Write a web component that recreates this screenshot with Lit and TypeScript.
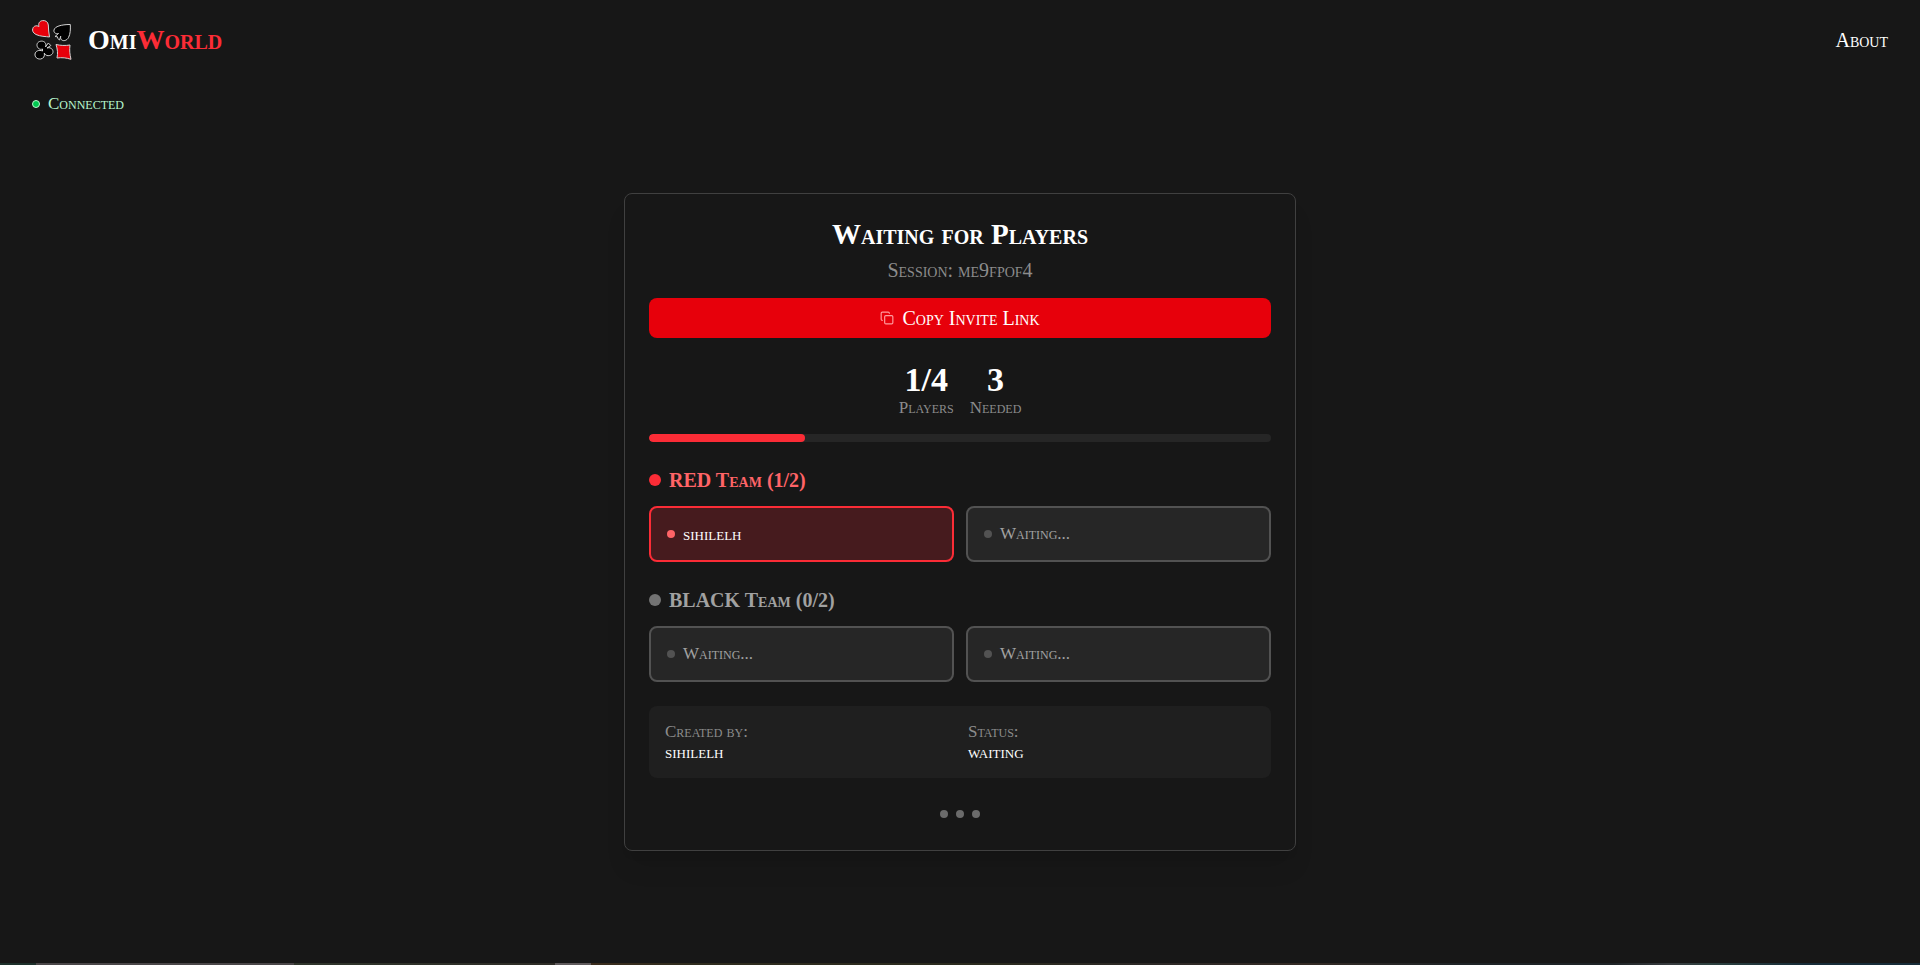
import { LitElement, html, css, svg } from "lit";
import { customElement, property, state } from "lit/decorators.js";

type Player = { name: string };

@customElement("brand-logo")
class BrandLogo extends LitElement {
  static styles = css`
    :host { display: block; line-height: 0; }
    .mark { width: 40px; height: 40px; }
  `;
  render() {
    return html`<svg class="mark" viewBox="0 0 40 40" stroke="#d4d4d4" stroke-width="1" stroke-linejoin="round" aria-hidden="true">
      ${svg`
      <path fill="#e7000b" d="M17.500 17 C14 16.500 8 16.500 4 14.500 C1 13 0 10.500 .8 8.500 C1.500 6 4.500 5 7 6.500 C6 3.500 7.500 1 10.500 .6 C13.500 .2 16 1.800 16.300 5 C16.500 9 16.700 13 17.500 17Z"/>
      <path fill="#000" d="M38.300 4.500 C38.500 9 38.500 14 36.500 17.500 C35 20.500 31.500 21.500 29.500 19.800 C28.700 19 28.400 17.800 28.700 16.200 L27.500 20 L25.800 18.500 L25.500 16.800 L23 16.500 L26.500 13.500 C23.500 14.200 21.500 12.500 22 10 C22.800 6.500 29 4.500 38.300 4.500Z"/>
      <path fill="#000" d="M10.500 29 C8 30 5.500 28.500 5 25.500 C4.700 22.500 7.500 20.800 10.500 21.200 C13.500 21.800 14.500 24.500 13.500 27 L16.300 23 L18.800 25.500 L15 28 C17.500 27 20.800 28.500 21 31.500 C21.200 34.500 18 36.200 15 35.500 C13.800 35.200 12.700 34 12.300 33 C13 36 11.500 38.800 8.500 39 C5 39.300 2.700 37 3 34 C3.500 31 7 29.500 10.500 31Z"/>
      <path fill="#e7000b" d="M24 24.500 C28.500 25.500 33 25.800 38 25 C37.300 30 37.800 34.500 39 39.300 C34.500 37.800 30 37.300 25 38 C26 33.500 25.500 29 24 24.500Z"/>`}
    </svg>`;
  }
}

@customElement("player-slot")
class PlayerSlot extends LitElement {
  @property({ attribute: false }) player?: Player;
  static styles = css`
    :host { display: block; }
    .slot {
      display: flex; align-items: center; gap: 8px; padding: 16px;
      border: 2px solid #525252; border-radius: 8px; background: #262626;
      color: #a1a1a1; font-size: 17px; line-height: 20px;
    }
    .slot.taken { border-color: #fb2c36; background: #461b1e; color: #fff; font-size: 18px; }
    .dot { width: 8px; height: 8px; border-radius: 50%; background: #525252; }
    .taken .dot { background: #ff6467; }
  `;
  render() {
    return html`<div class="slot ${this.player ? "taken" : ""}">
      <span class="dot"></span><span>${this.player?.name ?? "Waiting..."}</span>
    </div>`;
  }
}

@customElement("app-root")
class AppRoot extends LitElement {
  @state() private red: Player[] = [{ name: "sihilelh" }];
  @state() private black: Player[] = [];

  static styles = css`
    :host {
      display: flex; flex-direction: column; min-height: 100vh;
      background: #171717; color: #fff;
      font-family: "Liberation Serif", serif; font-variant-caps: small-caps;
      font-size: 20px; line-height: 24px;
    }
    * { box-sizing: border-box; }
    h2, h3, dl, dd, p { margin: 0; }
    .header { display: flex; align-items: center; justify-content: space-between; height: 80px; padding: 0 32px; }
    .brand { display: flex; align-items: center; gap: 16px; font-size: 28px; line-height: 32px; font-weight: 700; color: #fff; text-decoration: none; }
    .accent { color: #fb2c36; }
    .nav { color: #fff; text-decoration: none; }
    .main { flex: 1; display: grid; }
    .status { grid-area: 1 / 1; place-self: start; display: flex; align-items: center; gap: 8px; padding: 16px 32px; font-size: 17px; line-height: 16px; color: #b9f8cf; }
    .status-dot { width: 8px; height: 8px; border-radius: 50%; background: #00c950; border: 1px solid #b9f8cf; }
    .card {
      grid-area: 1 / 1; place-self: center; width: 100%; max-width: 672px;
      padding: 24px; border: 1px solid #404040; border-radius: 8px; background: #171717;
      box-shadow: 0 20px 25px -5px rgb(0 0 0 / 0.1), 0 8px 10px -6px rgb(0 0 0 / 0.1);
    }
    .intro { text-align: center; }
    .title { font-size: 29px; line-height: 32px; font-weight: 700; }
    .session { margin-top: 8px; color: #8c8c8c; }
    .copy {
      display: flex; align-items: center; justify-content: center; gap: 8px;
      width: 100%; height: 40px; margin-top: 16px; border: 0; border-radius: 8px;
      background: #e7000b; color: #fff; font: inherit; font-variant-caps: small-caps; cursor: pointer;
    }
    .copy-icon { width: 14px; height: 14px; color: #ff9a9e; }
    .stats { display: flex; justify-content: center; gap: 16px; margin-top: 24px; text-align: center; }
    .count { font-size: 34px; line-height: 36px; font-weight: 700; }
    .label { font-size: 17px; line-height: 20px; color: #8c8c8c; }
    .track { height: 8px; margin-top: 16px; border-radius: 4px; background: #262626; overflow: hidden; }
    .fill { height: 8px; border-radius: 4px; background: #fb2c36; }
    .team { margin-top: 24px; }
    .team-name { display: flex; align-items: center; gap: 8px; font-size: 20px; line-height: 28px; font-weight: 600; color: #a1a1a1; }
    .team-dot { width: 12px; height: 12px; border-radius: 50%; background: #737373; }
    .red { color: #ff6467; }
    .red .team-dot { background: #fb2c36; }
    .slots { display: grid; grid-template-columns: 1fr 1fr; gap: 12px; margin-top: 12px; }
    .info { display: grid; grid-template-columns: 1fr 1fr; gap: 16px; margin-top: 24px; padding: 16px; border-radius: 8px; background: #1f1f1f; }
    .value { font-size: 18px; line-height: 20px; }
    .dots { display: flex; align-items: center; justify-content: center; gap: 8px; height: 24px; margin-top: 24px; }
    .pulse { width: 8px; height: 8px; border-radius: 50%; background: #6b6b6b; }
    .edge {
      height: 2px;
      background: linear-gradient(90deg, #1d302b 0 1.9%, #4a4648 1.9% 15.3%, #2f352b 15.3%, #2e2c26 28.9%, #5f5a5c 28.9% 30.8%, #3a2c1c 30.8%, #2f2c1e 36%, #2a2a1e 52%, #2c2826 60%, #332a24 68%, #1e2326 76%, #1e2326 84%, #373b3e 87%, #2c403e 89%, #172c38 94%, #172c38 100%);
    }
  `;

  private team(name: string, players: Player[], cls: string) {
    return html`<section class="team">
      <h3 class="team-name ${cls}"><span class="team-dot"></span>${name} Team (${players.length}/2)</h3>
      <div class="slots">
        ${[0, 1].map((i) => html`<player-slot .player=${players[i]}></player-slot>`)}
      </div>
    </section>`;
  }

  render() {
    const joined = this.red.length + this.black.length;
    return html`
      <header class="header">
        <a class="brand" href="#"><brand-logo></brand-logo><span>Omi<span class="accent">World</span></span></a>
        <nav><a class="nav" href="#about">About</a></nav>
      </header>
      <main class="main">
        <div class="status"><span class="status-dot"></span>Connected</div>
        <section class="card">
          <div class="intro">
            <h2 class="title">Waiting for Players</h2>
            <p class="session">Session: me9fpof4</p>
          </div>
          <button class="copy" type="button">
            <svg class="copy-icon" viewBox="0 0 24 24" fill="none" stroke="currentColor" stroke-width="2" stroke-linecap="round" stroke-linejoin="round" aria-hidden="true">
              <rect x="8" y="8" width="14" height="14" rx="2"/><path d="M4 16c-1.100 0-2-.9-2-2V4c0-1.100.9-2 2-2h10c1.100 0 2 .9 2 2"/>
            </svg>
            Copy Invite Link
          </button>
          <div class="stats">
            <div><div class="count">${joined}/4</div><div class="label">Players</div></div>
            <div><div class="count">${4 - joined}</div><div class="label">Needed</div></div>
          </div>
          <div class="track"><div class="fill" style="width: ${joined * 25}%"></div></div>
          ${this.team("RED", this.red, "red")}
          ${this.team("BLACK", this.black, "")}
          <dl class="info">
            <div><dt class="label">Created by:</dt><dd class="value">sihilelh</dd></div>
            <div><dt class="label">Status:</dt><dd class="value">waiting</dd></div>
          </dl>
          <div class="dots"><span class="pulse"></span><span class="pulse"></span><span class="pulse"></span></div>
        </section>
      </main>
      <div class="edge"></div>`;
  }
}
